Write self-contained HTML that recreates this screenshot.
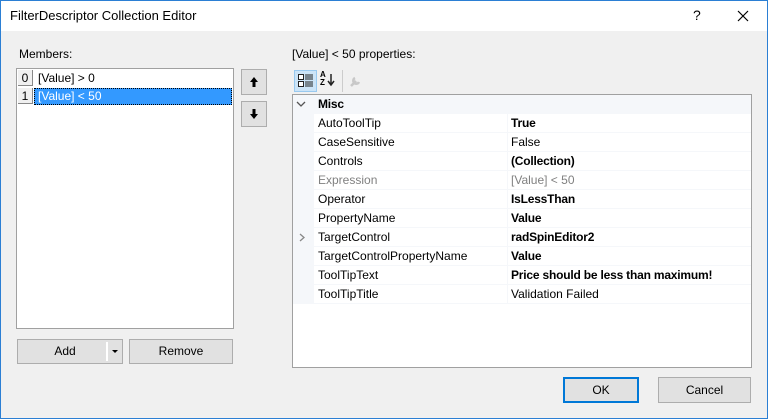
<!DOCTYPE html><html><head><style>
*{box-sizing:border-box;margin:0;padding:0}
body{width:768px;height:419px;position:relative;font-family:"Liberation Sans",sans-serif;font-size:12px;color:#000;background:#f0f0f0;overflow:hidden}
.frame{position:absolute;left:0;top:0;width:768px;height:419px;border:1px solid #2b7fd4;z-index:5;pointer-events:none}
.title{position:absolute;left:0;top:0;width:768px;height:31px;background:#fff}
.a{position:absolute;white-space:nowrap}
.btn{position:absolute;background:#e1e1e1;border:1px solid #adadad;text-align:center;line-height:22px}
.row{position:absolute;left:314px;width:437px;height:18px;line-height:18px}
.n{position:absolute;left:0;width:193px;height:18px;background:#fff;padding-left:4px}
.v{position:absolute;left:194px;width:243px;height:18px;background:#fff;padding-left:3px}
b{font-weight:bold;letter-spacing:-0.2px}
</style></head><body>
<div class="frame"></div>
<div class="title"></div>
<div class="a" style="left:10px;top:8px;font-size:13px">FilterDescriptor Collection Editor</div>
<div class="a" style="left:693px;top:7px;font-size:14px">?</div>
<svg class="a" style="left:737px;top:10px" width="12" height="12"><path d="M1 1L11 11M11 1L1 11" stroke="#000" stroke-width="1.2"/></svg>
<div class="a" style="left:19px;top:47px">Members:</div>
<div class="a" style="left:16px;top:68px;width:218px;height:261px;background:#fff;border:1px solid #a0a0a0"></div>
<div class="a" style="left:18px;top:70px;width:15px;height:16px;background:#f0f0f0;border-right:1px solid #888;border-bottom:1px solid #888;text-align:center;line-height:16px">0</div>
<div class="a" style="left:38px;top:70px;line-height:16px">[Value] &gt; 0</div>
<div class="a" style="left:18px;top:88px;width:15px;height:16px;background:#f0f0f0;border-right:1px solid #888;border-bottom:1px solid #888;text-align:center;line-height:16px">1</div>
<div class="a" style="left:34px;top:88px;width:198px;height:17px;background:#3399ff;border:1px dotted #000;color:#fff;line-height:15px;padding-left:3px">[Value] &lt; 50</div>
<div class="btn" style="left:241px;top:69px;width:26px;height:26px"></div>
<div class="btn" style="left:241px;top:101px;width:26px;height:26px"></div>
<svg class="a" style="left:249px;top:76px" width="10" height="12"><path d="M5 1L9 6H6.5V11H3.5V6H1Z" fill="#000"/></svg>
<svg class="a" style="left:249px;top:108px" width="10" height="12"><path d="M5 11L9 6H6.5V1H3.5V6H1Z" fill="#000"/></svg>
<div class="btn" style="left:17px;top:339px;width:106px;height:25px">&nbsp;&nbsp;&nbsp;&nbsp;Add&nbsp;&nbsp;&nbsp;&nbsp;&nbsp;&nbsp;&nbsp;</div>
<div class="a" style="left:106px;top:342px;width:2px;height:19px;background:#fff"></div>
<div class="a" style="left:112px;top:350px;width:0;height:0;border-left:3px solid transparent;border-right:3px solid transparent;border-top:3px solid #000"></div>
<div class="btn" style="left:129px;top:339px;width:104px;height:25px">Remove</div>
<div class="a" style="left:292px;top:47px">[Value] &lt; 50 properties:</div>
<div class="a" style="left:294px;top:70px;width:23px;height:22px;background:#cce4f7;border:1px solid #99c9ef"></div>
<svg class="a" style="left:298px;top:74px" width="16" height="14"><rect x="0.5" y="0.5" width="5" height="5" fill="#fff" stroke="#222"/><rect x="0.5" y="7.5" width="5" height="5" fill="#fff" stroke="#222"/><path d="M7 1h8M7 3h8M7 5h8M7 8h8M7 10h8M7 12h8" stroke="#222"/></svg>
<div class="a" style="left:320px;top:71px;font-size:8px;font-weight:bold;line-height:8px">A<br>Z</div>
<svg class="a" style="left:327px;top:73px" width="8" height="14"><path d="M4 1V11M1 8L4 12L7 8" stroke="#222" stroke-width="1.5" fill="none"/></svg>
<div class="a" style="left:342px;top:70px;width:1px;height:22px;background:#ccc"></div>
<svg class="a" style="left:349px;top:74px" width="14" height="14"><path d="M2 12L7 7M6 4a3 3 0 1 0 4 4" stroke="#c8c8c8" stroke-width="2.5" fill="none"/></svg>
<div class="a" style="left:292px;top:94px;width:460px;height:274px;background:#fff;border:1px solid #a0a0a0"></div>
<div class="a" style="left:293px;top:95px;width:458px;height:209px;background:#f5f7fa"></div>
<svg class="a" style="left:296px;top:100px" width="10" height="8"><path d="M1 2L5 6L9 2" stroke="#555" fill="none" stroke-width="1.3"/></svg>
<div class="a" style="left:318px;top:95px;line-height:18px"><b>Misc</b></div>
<div class="row" style="top:114px"><div class="n">AutoToolTip</div><div class="v"><b>True</b></div></div>
<div class="row" style="top:133px"><div class="n">CaseSensitive</div><div class="v">False</div></div>
<div class="row" style="top:152px"><div class="n">Controls</div><div class="v"><b>(Collection)</b></div></div>
<div class="row" style="top:171px;color:#808080"><div class="n">Expression</div><div class="v">[Value] &lt; 50</div></div>
<div class="row" style="top:190px"><div class="n">Operator</div><div class="v"><b>IsLessThan</b></div></div>
<div class="row" style="top:209px"><div class="n">PropertyName</div><div class="v"><b>Value</b></div></div>
<div class="row" style="top:228px"><div class="n">TargetControl</div><div class="v"><b>radSpinEditor2</b></div></div>
<svg class="a" style="left:299px;top:233px" width="6" height="9"><path d="M1 1L5 4.5L1 8" stroke="#888" fill="none" stroke-width="1.3"/></svg>
<div class="row" style="top:247px"><div class="n">TargetControlPropertyName</div><div class="v"><b>Value</b></div></div>
<div class="row" style="top:266px"><div class="n">ToolTipText</div><div class="v"><b>Price should be less than maximum!</b></div></div>
<div class="row" style="top:285px"><div class="n">ToolTipTitle</div><div class="v">Validation Failed</div></div>
<div class="btn" style="left:563px;top:377px;width:76px;height:26px;border:2px solid #0078d7;line-height:22px">OK</div>
<div class="btn" style="left:658px;top:377px;width:93px;height:26px;line-height:24px">Cancel</div>
</body></html>
